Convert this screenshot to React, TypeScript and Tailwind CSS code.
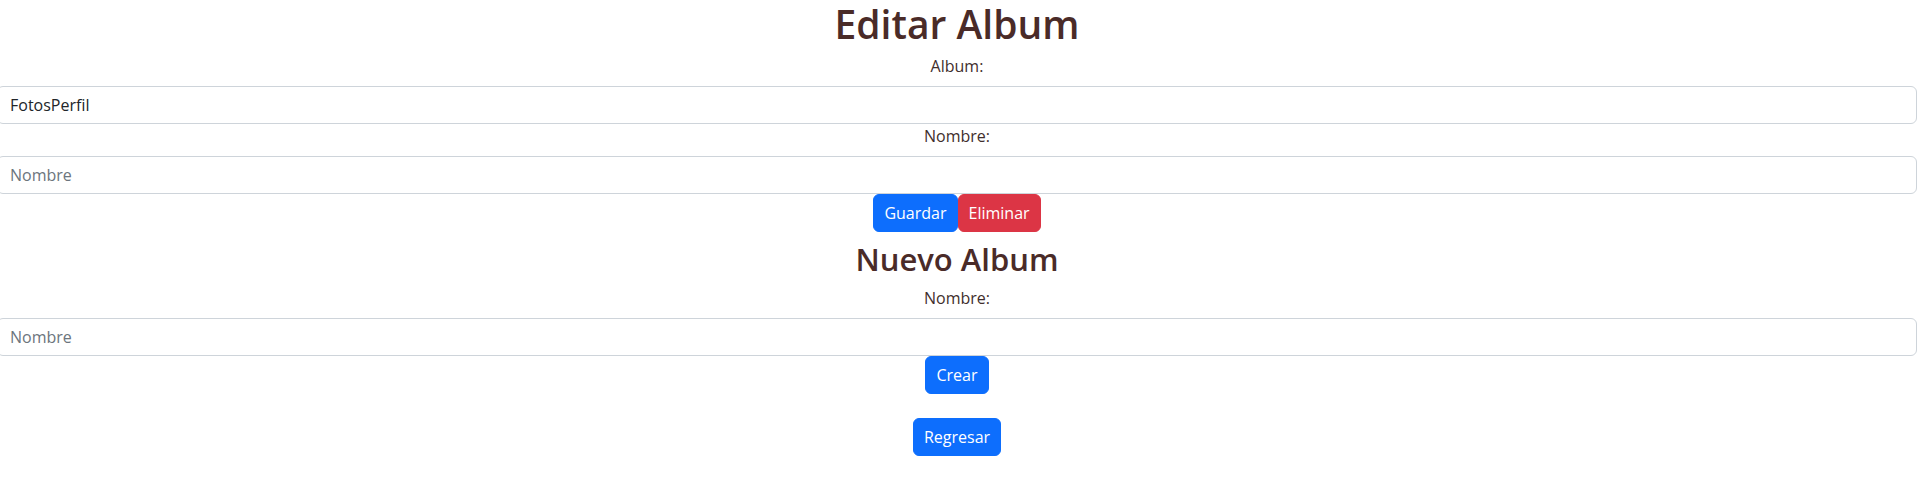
import React from "react";

const labelCls = "block text-center text-[16px] leading-6 mb-2 text-[#3f2e2c]";
const inputCls =
  "block w-full h-[38px] px-3 py-[6px] text-[16px] leading-6 text-[#212529] bg-white border border-[#ced4da] rounded-[6px] placeholder:text-[#6c757d] outline-none";
const btn = "h-[38px] px-[10px] text-[16px] leading-6 text-white rounded-[6px] border";

export default function App() {
  return (
    <div className="ml-[-3px] mr-[3px] font-['Open_Sans',sans-serif] bg-white min-h-[499px]">
      <h1 className="text-center text-[39px] leading-[48px] font-semibold text-[#4a2b28] mb-[6px]">
        Editar Album
      </h1>
      <label className={labelCls}>Album:</label>
      <input className={inputCls} defaultValue="FotosPerfil" />
      <label className={labelCls}>Nombre:</label>
      <input className={inputCls} placeholder="Nombre" />
      <div className="flex justify-center">
        <button className={`${btn} bg-[#0d6efd] border-[#0d6efd]`}>Guardar</button>
        <button className={`${btn} bg-[#dc3545] border-[#dc3545]`}>Eliminar</button>
      </div>
      <h2 className="mt-2 mb-2 text-center text-[31px] leading-[38.4px] font-semibold text-[#4a2b28]">
        Nuevo Album
      </h2>
      <label className={labelCls}>Nombre:</label>
      <input className={inputCls} placeholder="Nombre" />
      <div className="flex justify-center">
        <button className={`${btn} bg-[#0d6efd] border-[#0d6efd]`}>Crear</button>
      </div>
      <div className="flex justify-center mt-6">
        <button className={`${btn} bg-[#0d6efd] border-[#0d6efd]`}>Regresar</button>
      </div>
    </div>
  );
}
